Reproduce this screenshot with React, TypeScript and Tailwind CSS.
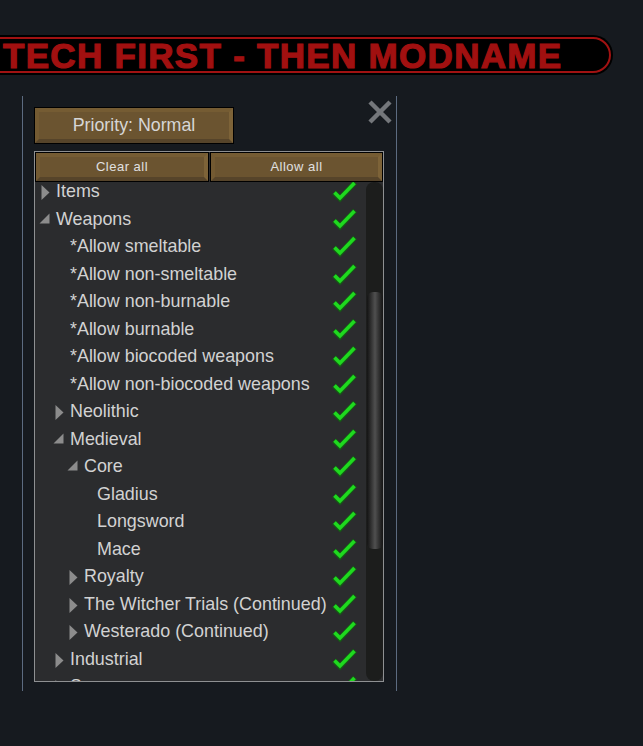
const rows: { label: string; indent: number; arrow?: "right" | "down" }[] = [
  { label: "Items", indent: 0, arrow: "right" },
  { label: "Weapons", indent: 0, arrow: "down" },
  { label: "*Allow smeltable", indent: 1 },
  { label: "*Allow non-smeltable", indent: 1 },
  { label: "*Allow non-burnable", indent: 1 },
  { label: "*Allow burnable", indent: 1 },
  { label: "*Allow biocoded weapons", indent: 1 },
  { label: "*Allow non-biocoded weapons", indent: 1 },
  { label: "Neolithic", indent: 1, arrow: "right" },
  { label: "Medieval", indent: 1, arrow: "down" },
  { label: "Core", indent: 2, arrow: "down" },
  { label: "Gladius", indent: 3 },
  { label: "Longsword", indent: 3 },
  { label: "Mace", indent: 3 },
  { label: "Royalty", indent: 2, arrow: "right" },
  { label: "The Witcher Trials (Continued)", indent: 2, arrow: "right" },
  { label: "Westerado (Continued)", indent: 2, arrow: "right" },
  { label: "Industrial", indent: 1, arrow: "right" },
  { label: "Spacer", indent: 1, arrow: "right" },
];

const indentClass = ["pl-[21px]", "pl-[35px]", "pl-[49px]", "pl-[62px]"];

function Arrow({ dir }: { dir?: "right" | "down" }) {
  if (!dir) return null;
  return (
    <svg width="12" height="17" viewBox="0 0 12 17" className="absolute left-[-17px] top-[6px]">
      {dir === "right" ? (
        <path d="M2.5 1 L10.5 8.5 L2.5 16 Z" fill="#8c8c8c" />
      ) : (
        <path d="M0.5 11.5 L10.5 1.5 L10.5 11.5 Z" fill="#8c8c8c" />
      )}
    </svg>
  );
}

function Check() {
  return (
    <svg width="26" height="24" viewBox="0 0 26 24" className="shrink-0">
      <path d="M3 13.5 L9 19.5 L24 3.5" fill="none" stroke="#155a15" strokeWidth="5.4" />
      <path d="M3.5 13.5 L9 19 L23.5 4" fill="none" stroke="#1fd91f" strokeWidth="3.6" />
    </svg>
  );
}

function WoodButton({ label, className, inner }: { label: string; className: string; inner: string }) {
  return (
    <div className={`border border-black ${className}`}>
      <div
        className={`h-full flex items-center justify-center bg-[#6b5430] border-[4px] border-t-[#755c33] border-l-[#735a32] border-r-[#7d6338] border-b-[#56442a] ${inner}`}
      >
        {label}
      </div>
    </div>
  );
}

export default function App() {
  return (
    <div className="h-[746px] w-[643px] overflow-hidden bg-[#161a1f] pt-[35px] font-['Liberation_Sans',Arial,sans-serif]">
      <div className="ml-[-30px] h-[40px] w-[643px] rounded-r-[20px] bg-black p-[2px]">
        <div className="h-full flex items-center rounded-r-[18px] border-2 border-[#a11212] pl-[29px] text-[35px] font-bold leading-none tracking-[1.3px] text-[#a11010] [-webkit-text-stroke:1.2px_#a11010] whitespace-nowrap">
          TECH FIRST - THEN MODNAME
        </div>
      </div>

      <div className="relative ml-[22px] mt-[21px] h-[595px] w-[375px] border-x border-[#5c6b80] pl-[11px] pt-[11px]">
        <svg width="24" height="24" viewBox="0 0 24 24" className="absolute left-[345px] top-[4px]">
          <path d="M2 2 L22 22 M22 2 L2 22" stroke="#74777b" strokeWidth="4.5" />
        </svg>

        <WoodButton
          label="Priority: Normal"
          className="h-[37px] w-[200px]"
          inner="text-[17.8px] text-[#d6d6d6]"
        />

        <div className="mt-[7px] flex h-[531px] w-[350px] flex-col border border-[#8e9092] bg-[#2b2c2e]">
          <div className="z-10 flex h-[30px] shrink-0 gap-[1px]">
            <WoodButton
              label="Clear all"
              className="w-[174px]"
              inner="text-[13px] tracking-[0.5px] text-[#e0e0e0]"
            />
            <WoodButton
              label="Allow all"
              className="w-[173px]"
              inner="text-[13px] tracking-[0.5px] text-[#e0e0e0]"
            />
          </div>
          <div className="flex min-h-0 flex-1">
            <div className="min-w-0 flex-1 overflow-hidden">
              <div className="mt-[-4.5px]">
                {rows.map((row) => (
                  <div key={row.label} className="flex h-[27.5px] items-center pr-[9px]">
                    <div className={`min-w-0 flex-1 ${indentClass[row.indent]}`}>
                      <div className="relative whitespace-nowrap text-[17.9px] leading-[26px] text-[#d2d2d2]">
                        <Arrow dir={row.arrow} />
                        {row.label}
                      </div>
                    </div>
                    <Check />
                  </div>
                ))}
              </div>
            </div>
            <div className="h-full w-[17px] shrink-0 rounded-[8px] bg-[#1c1d1c] pt-[110px]">
              <div className="mx-auto h-[257px] w-[16px] rounded-[6px] bg-gradient-to-r from-[#141414] via-[#505050] to-[#141414]" />
            </div>
          </div>
        </div>
      </div>
    </div>
  );
}
